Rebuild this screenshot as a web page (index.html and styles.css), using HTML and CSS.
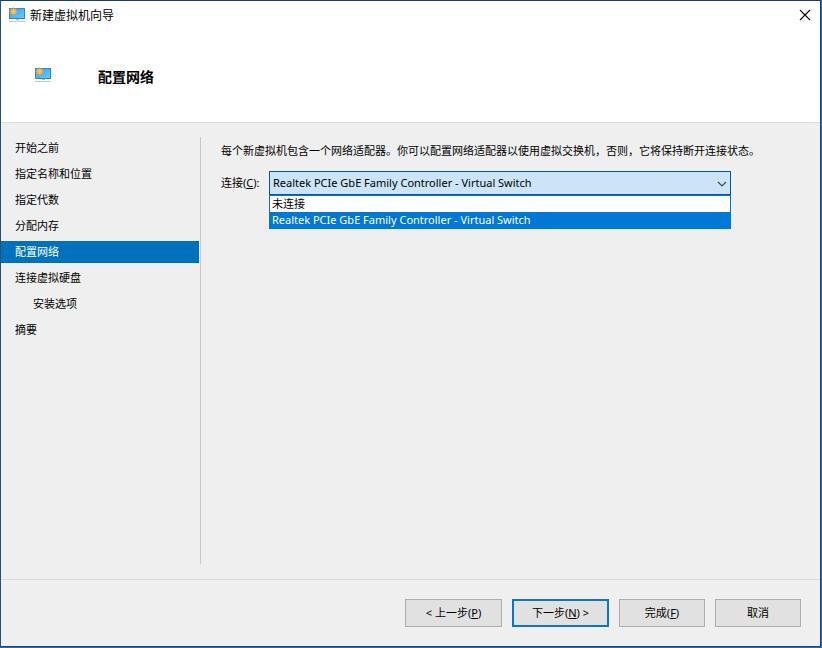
FILE: index.html
```html
<!DOCTYPE html>
<html lang="zh-CN">
<head>
    <meta charset="UTF-8">
    <meta name="viewport" content="width=device-width, initial-scale=1.0">
    <title>新建虚拟机向导</title>
    <link rel="stylesheet" href="styles.css">
</head>
<body>
    <div class="wizard">
        <header class="header">
            <div class="title-bar">
                <svg class="vm-icon" viewBox="0 0 16 16" aria-hidden="true">
                    <defs>
                        <linearGradient id="screen" x1="0" y1="0" x2="1" y2="1">
                            <stop offset="0" stop-color="#2fa0ea"/>
                            <stop offset="1" stop-color="#6accff"/>
                        </linearGradient>
                    </defs>
                    <symbol id="vm" viewBox="0 0 16 16">
                        <rect x="0.5" y="1.5" width="15" height="10" fill="url(#screen)" stroke="#3d86b4"/>
                        <rect x="7" y="12" width="3" height="1" fill="#8fc4e2"/>
                        <rect x="0" y="14" width="16" height="1" fill="#c3cacf"/>
                        <path d="M4.5 0.5V8.5M0.5 4.5H8.5M1.7 1.7L7.3 7.3M7.3 1.7L1.7 7.3" stroke="#d9ad5c" stroke-width="1.4"/>
                        <circle cx="4.5" cy="4.5" r="2.6" fill="#f0b94a"/>
                        <circle cx="4.5" cy="4.5" r="1.1" fill="#fbd07a"/>
                    </symbol>
                    <use href="#vm"/>
                </svg>
                <span class="title">新建虚拟机向导</span>
                <button type="button" class="close" aria-label="关闭">
                    <svg viewBox="0 0 12 12" aria-hidden="true">
                        <path d="M1 1L11 11M11 1L1 11" fill="none" stroke="#000" stroke-width="1.1"/>
                    </svg>
                </button>
            </div>
            <div class="banner">
                <svg class="vm-icon" viewBox="0 0 16 16" aria-hidden="true"><use href="#vm"/></svg>
                <h1>配置网络</h1>
            </div>
        </header>

        <div class="content">
            <nav class="steps">
                <a href="#">开始之前</a>
                <a href="#">指定名称和位置</a>
                <a href="#">指定代数</a>
                <a href="#">分配内存</a>
                <a href="#" class="active" aria-current="step">配置网络</a>
                <a href="#">连接虚拟硬盘</a>
                <a href="#" class="sub">安装选项</a>
                <a href="#">摘要</a>
            </nav>

            <main class="page">
                <p>每个新虚拟机包含一个网络适配器。你可以配置网络适配器以使用虚拟交换机，否则，它将保持断开连接状态。</p>
                <div class="field">
                    <label for="connection">连接(<u>C</u>):</label>
                    <div class="combo">
                        <select id="connection">
                            <option>未连接</option>
                            <option selected>Realtek PCIe GbE Family Controller - Virtual Switch</option>
                        </select>
                        <svg class="arrow" viewBox="0 0 10 6" aria-hidden="true">
                            <path d="M1 1L5 5L9 1" fill="none" stroke="#444" stroke-width="1.1"/>
                        </svg>
                        <ul class="options" role="listbox" aria-label="连接">
                            <li role="option">未连接</li>
                            <li role="option" class="selected" aria-selected="true">Realtek PCIe GbE Family Controller - Virtual Switch</li>
                        </ul>
                    </div>
                </div>
            </main>
        </div>

        <footer class="footer">
            <button type="button" class="btn wide">&lt; 上一步(<u>P</u>)</button>
            <button type="button" class="btn wide default">下一步(<u>N</u>) &gt;</button>
            <button type="button" class="btn">完成(<u>F</u>)</button>
            <button type="button" class="btn">取消</button>
        </footer>
    </div>
</body>
</html>
```
FILE: styles.css
```css
* {
    box-sizing: border-box;
}

body {
    display: flex;
    min-height: 100vh;
    margin: 0;
    padding: 0 1px 1px 0;
    background-color: #1f6fba;
    color: #000;
    font-family: "Noto Sans", "Noto Sans CJK SC", sans-serif;
    font-size: 11px;
    line-height: 16px;
}

.wizard {
    display: flex;
    flex: 1;
    flex-direction: column;
    border: 1px solid #0b4a86;
    border-top-color: #1f3f5f;
    border-left-color: #2b4f6e;
    background-color: #efefef;
}

/* Header */
.header {
    height: 122px;
    background-color: #fff;
    border-bottom: 1px solid #dcdcdc;
}

.title-bar {
    display: flex;
    align-items: center;
    height: 28px;
    padding: 0 8px;
}

.vm-icon {
    width: 16px;
    height: 16px;
    flex: none;
}

.title {
    padding-top: 2px;
    margin-left: 5px;
    font-size: 12px;
}

.close {
    display: flex;
    margin-left: auto;
    padding: 1px;
    border: none;
    background: none;
}

.close svg {
    width: 12px;
    height: 12px;
}

.banner {
    display: flex;
    align-items: flex-start;
    gap: 47px;
    padding: 38px 34px;
}

h1 {
    margin: 0;
    font-size: 14px;
    line-height: 20px;
}

/* Steps and page */
.content {
    display: flex;
    flex: 1;
    padding: 14px 0 15px;
}

.steps {
    display: flex;
    flex-direction: column;
    gap: 4px;
    width: 200px;
    padding-right: 1px;
    border-right: 1px solid #c8c8c8;
}

.steps a {
    padding: 3px 14px;
    color: #000;
    text-decoration: none;
}

.steps a.sub {
    padding-left: 32px;
}

.steps a.active {
    background-color: #0071bc;
    color: #fff;
}

.page {
    flex: 1;
    padding: 6px 20px;
}

.page p {
    margin: 0 0 12px;
}

.field {
    display: flex;
    align-items: center;
    margin-right: 69px;
}

.field label {
    width: 48px;
    flex: none;
}

.combo {
    position: relative;
    flex: 1;
}

.combo select {
    display: block;
    width: 100%;
    height: 24px;
    padding: 0 24px 0 3px;
    appearance: none;
    border: 1px solid #0a549a;
    border-radius: 0;
    background-color: #cce4f7;
    color: #000;
    font: inherit;
}

.arrow {
    position: absolute;
    top: 10px;
    right: 4px;
    width: 10px;
    height: 6px;
    pointer-events: none;
}

.options {
    position: absolute;
    top: 100%;
    left: 0;
    right: 0;
    margin: 0;
    padding: 0;
    border: 1px solid #0078d7;
    background-color: #fff;
    list-style: none;
}

.options li {
    padding: 0 2px;
}

.options .selected {
    background-color: #0078d7;
    color: #fff;
}

/* Buttons */
.footer {
    display: flex;
    justify-content: flex-end;
    gap: 10px;
    padding: 19px;
    border-top: 1px solid #dcdcdc;
}

.btn {
    width: 86px;
    height: 28px;
    padding: 0;
    border: 1px solid #adadad;
    background-color: #e1e1e1;
    color: #000;
    font: inherit;
}

.btn.wide {
    width: 97px;
}

.btn.default {
    border: 2px solid #0f74c4;
}
```
